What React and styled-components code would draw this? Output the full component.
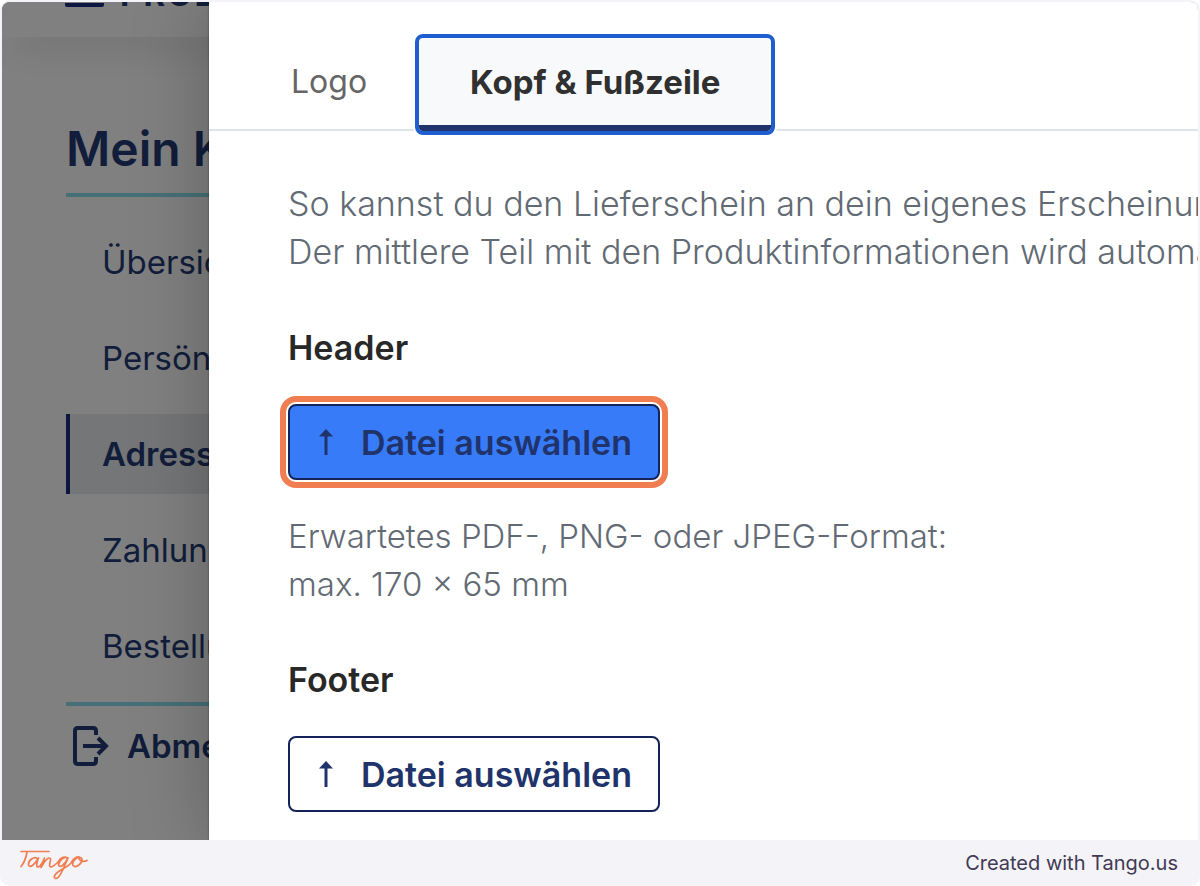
import React, { useState } from 'react'
import styled, { createGlobalStyle, css } from 'styled-components'

const menu = ['Übersicht', 'Persönliche Daten', 'Adressen', 'Zahlungsarten', 'Bestellungen']
const tabs = ['Logo', 'Kopf & Fußzeile']

const UploadIcon = () => (
    <svg width="14" height="26" viewBox="0 0 14 26" aria-hidden="true">
        <path d="M7 5V26" stroke="currentColor" strokeWidth="3" />
        <path d="M7 0L14 7.500H0Z" fill="currentColor" />
    </svg>
)

const LogoutIcon = () => (
    <svg width="36" height="40" viewBox="0 0 36 40" fill="none" stroke="currentColor" strokeWidth="4" aria-hidden="true">
        <path d="M23 9V5Q23 2 20 2H5Q2 2 2 5V35Q2 38 5 38H20Q23 38 23 35V31" />
        <path d="M10 20H33M25 12L33 20L25 28" />
    </svg>
)

const TangoLogo = () => (
    <svg width="68" height="34" viewBox="0 -4 68 34" fill="none" stroke="#f07e50" strokeWidth="1.700" strokeLinecap="round" strokeLinejoin="round" role="img" aria-label="Tango">
        <path d="M1 1.500H29" />
        <path d="M7 2C6 8 4 13 1 16.500" />
        <path d="M18 9C14 5 8 11 8.500 15C10 19 15 14 18.500 8C16.500 13 16 17 18 17C20 17 23 12 24.500 8C24 12 22 15 21 17.500C25 10 29 6 30.500 9C31 11 28 16 30.500 17C33 17 36 14 38 12C41 7 45 6 47.500 8C44 6 38.500 11 38.500 15C40 19 45 14 48 8C44 16 42 24 38 27.500C36 29.500 33 28 35 25C38 20 47 18 51 13C54 7 58 6 60 7.500C56 7 51.500 12 53 15.500C56 18.500 62 14 62 9.500C62 7 58 7 59.500 9.500C61 12 65 11.500 67 10.500" />
    </svg>
)

const App = () => {
    const [tab, setTab] = useState(1)

    return (
        <Frame>
            <Global />
            <Screen>
                <Backdrop>
                    <Page>
                        <TopBar>
                            <Burger aria-label="Menü" />
                            <Brand>PRODUKTE</Brand>
                        </TopBar>
                        <Account>
                            <Title>Mein Konto</Title>
                            <Menu>
                                {menu.map((item, i) => (
                                    <MenuItem href="#" key={item} $active={i === 2}>{item}</MenuItem>
                                ))}
                            </Menu>
                            <Logout href="#"><LogoutIcon />Abmelden</Logout>
                        </Account>
                    </Page>
                </Backdrop>
                <Drawer>
                    <TabList role="tablist">
                        {tabs.map((name, i) => (
                            <Tab role="tab" key={name} aria-selected={tab === i} $active={tab === i} onClick={() => setTab(i)}>{name}</Tab>
                        ))}
                    </TabList>
                    <Panel role="tabpanel">
                        <Text $lead>
                            So kannst du den Lieferschein an dein eigenes Erscheinungsbild anpassen.<br />
                            Der mittlere Teil mit den Produktinformationen wird automatisch erstellt.
                        </Text>
                        <Group>
                            <Heading>Header</Heading>
                            <Upload $marked><UploadIcon />Datei auswählen</Upload>
                            <Text>
                                Erwartetes PDF-, PNG- oder JPEG-Format:<br />
                                max. 170 × 65 mm
                            </Text>
                        </Group>
                        <Group>
                            <Heading>Footer</Heading>
                            <Upload><UploadIcon />Datei auswählen</Upload>
                        </Group>
                    </Panel>
                </Drawer>
            </Screen>
            <Credits>
                <TangoLogo />
                <span>Created with Tango.us</span>
            </Credits>
        </Frame>
    )
}

export default App

const Global = createGlobalStyle`
* { box-sizing:border-box; }
body {
    margin:0;
    background:#fff;
    font-family:Inter, "Open Sans", sans-serif;
}
button { font-family:inherit; }
`;
const Frame = styled.div`
min-height:100vh;
display:flex;
flex-direction:column;
background:#f3f3f8;
border-radius:10px;
`;
const Screen = styled.div`
flex:1;
display:flex;
margin:2px 2px 0;
overflow:hidden;
border-radius:8px 8px 0 0;
`;
const Backdrop = styled.div`
flex:0 0 207px;
overflow:hidden;
background:#808080;
color:#111d3a;
`;
const Page = styled.div`
width:600px;
`;
const TopBar = styled.header`
height:35px;
display:flex;
align-items:flex-end;
gap:16px;
padding:0 0 30px 63px;
background:#808080;
box-shadow:0 20px 32px -12px rgba(0,0,0,0.2);
`;
const Burger = styled.button`
width:39px;
height:30px;
padding:0;
border:0;
border-bottom:4px solid #0b1741;
border-radius:2px;
background:none;
`;
const Brand = styled.span`
font-size:33px;
font-weight:700;
line-height:26px;
letter-spacing:2px;
`;
const Account = styled.div`
padding:76px 0 0 64px;
`;
const Title = styled.h1`
margin:0;
padding-bottom:8px;
font-size:48px;
font-weight:600;
line-height:72px;
border-bottom:4px solid #467077;
`;
const Menu = styled.nav`
display:flex;
flex-direction:column;
gap:16px;
padding:25px 0 16px;
border-bottom:4px solid #467077;
`;
const MenuItem = styled.a`
height:80px;
padding-left:32px;
border-left:4px solid transparent;
color:inherit;
font-size:33px;
font-weight:400;
line-height:80px;
text-decoration:none;
${p => p.$active && css`
    background:#747678;
    border-color:#0b1741;
    font-weight:600;
`}
`;
const Logout = styled.a`
display:flex;
align-items:center;
gap:18px;
height:80px;
padding-left:7px;
color:inherit;
font-size:33px;
font-weight:600;
text-decoration:none;
`;
const Drawer = styled.main`
flex:1;
min-width:0;
z-index:1;
background:#fff;
box-shadow:0 0 72px rgba(0,0,0,0.25), 0 0 2px rgba(0,0,0,0.4);
`;
const TabList = styled.div`
display:flex;
gap:6px;
padding:36px 0 0 36px;
border-bottom:2px solid #dfe3ea;
`;
const Tab = styled.button`
height:93px;
margin-bottom:-2px;
padding:0 46px;
border:0;
border-bottom:6px solid transparent;
background:none;
color:#666;
font-size:32px;
font-weight:400;
${p => p.$active && css`
    padding:0 51px;
    background:#f8f9fb;
    border-color:#20336a;
    border-radius:4px;
    outline:4px solid #1f5ecf;
    box-shadow:0 0 0 6px #fff;
    color:#303030;
    font-size:33px;
    font-weight:700;
`}
`;
const Panel = styled.div`
display:flex;
flex-direction:column;
gap:48px;
padding:49px 0 27px 79px;
overflow:hidden;
`;
const Group = styled.section`
display:flex;
flex-direction:column;
align-items:flex-start;
gap:32px;
`;
const Text = styled.p`
margin:0;
color:#626a74;
font-size:${p => p.$lead ? '34px' : '33px'};
font-weight:300;
line-height:48px;
white-space:nowrap;
`;
const Heading = styled.h2`
margin:0;
color:#282828;
font-size:34px;
font-weight:600;
line-height:48px;
`;
const Upload = styled.button`
display:flex;
align-items:center;
gap:28px;
height:76px;
padding:0 26px 0 29px;
border:2px solid #14235a;
border-radius:8px;
background:#fff;
color:#20336a;
font-size:34px;
font-weight:600;
white-space:nowrap;
${p => p.$marked && css`
    background:#377bf8;
    outline:6px solid #f07e50;
    outline-offset:2px;
`}
`;
const Credits = styled.footer`
display:flex;
align-items:center;
justify-content:space-between;
height:46px;
padding:0 22px 0 20px;
color:#413a54;
font-size:20px;
`;
